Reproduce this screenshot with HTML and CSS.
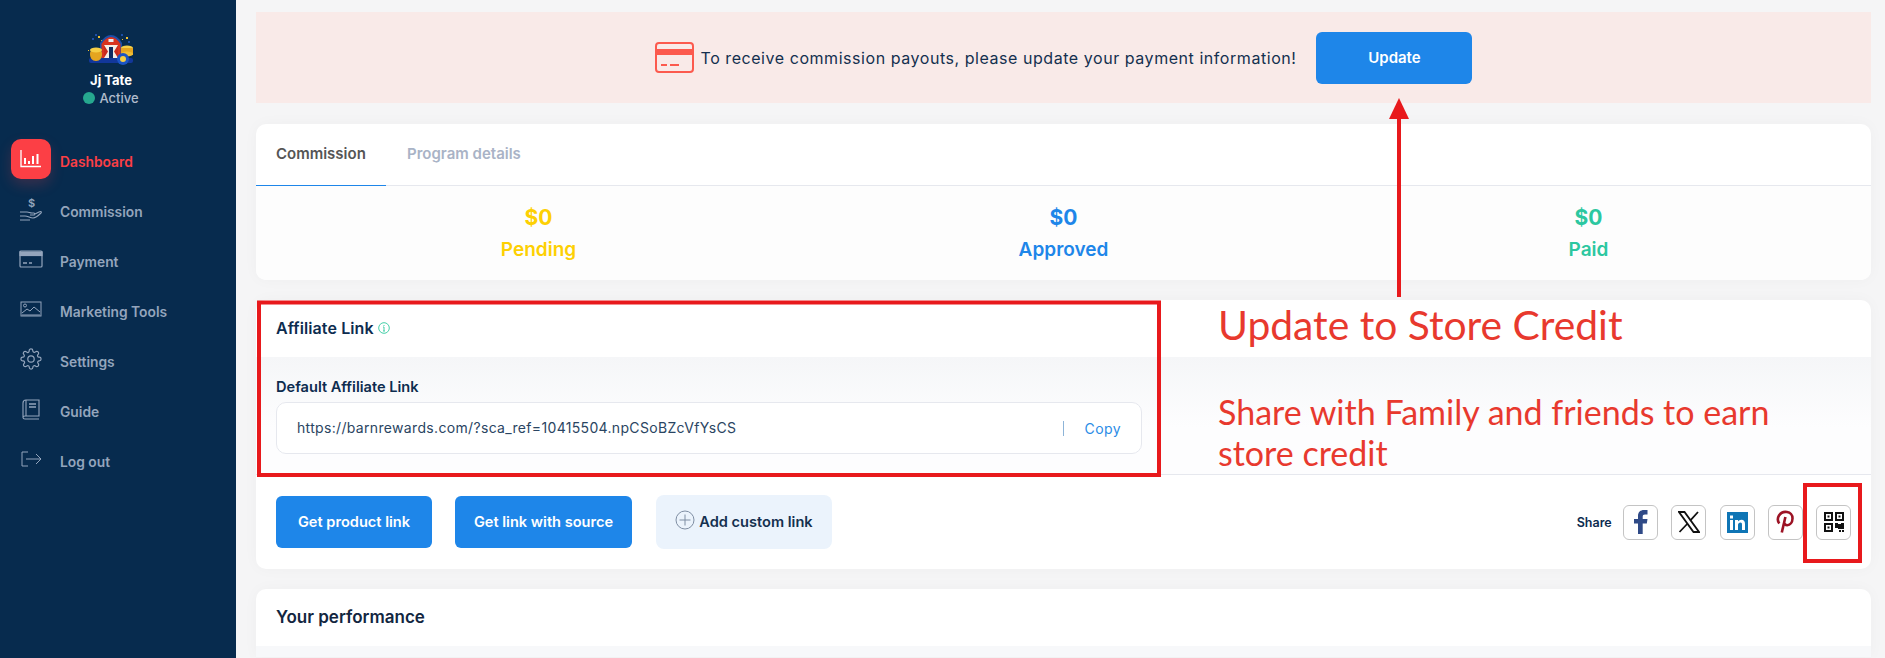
FILE: index.html
```html
<!DOCTYPE html>
<html lang="en">
<head>
  <meta charset="UTF-8">
  <title>Affiliate Dashboard</title>
  <link rel="stylesheet" href="styles.css">
</head>
<body>
  <aside class="sidebar">
    <div class="profile">
      <svg class="logo" viewBox="0 0 48 34">
        <g fill="#1d4fa8"><rect x="5" y="5" width="2" height="2"/><rect x="34" y="1" width="2" height="2"/><rect x="41" y="8" width="2" height="2"/><rect x="8" y="1" width="2" height="2"/></g>
        <g fill="#f2c230"><rect x="11" y="3" width="2" height="2"/><rect x="39" y="4" width="2" height="2"/><rect x="44" y="14" width="1" height="1"/><rect x="1" y="17" width="1" height="1"/><rect x="14" y="7" width="1" height="1"/><rect x="35" y="6" width="1" height="1"/></g>
        <rect x="2" y="25" width="44" height="5" rx="2" fill="#12379a"/>
        <path d="M13 25V10Q18 2 24 2T35 10v15z" fill="#1d4fa8"/>
        <path d="M14.500 25V11Q19 4 24 4T33.500 11v14z" fill="#d8321f"/>
        <rect x="21.500" y="6" width="5" height="3" fill="#e8eef5"/>
        <rect x="17" y="12" width="14" height="13" fill="#f4ece6"/>
        <path d="M17 12l4 6.500-4 6.500zM31 12l-4 6.500 4 6.500z" fill="#c92a1e"/>
        <rect x="22" y="14" width="4" height="11" fill="#0f2a60"/>
        <path d="M3 21c0-4 3-6 6-6s6 2 6 6-2 7-6 7-6-3-6-7z" fill="#e5a51f"/>
        <ellipse cx="9" cy="17" rx="6" ry="2.500" fill="#f6cf45"/>
        <ellipse cx="40" cy="15" rx="6" ry="2.500" fill="#f6cf45"/>
        <rect x="34" y="15" width="12" height="7" fill="#e5a51f"/>
        <ellipse cx="40" cy="21" rx="6" ry="2.500" fill="#f0bd35"/>
        <circle cx="36" cy="26" r="6" fill="#1b55c4"/>
        <circle cx="36" cy="26" r="3" fill="#f6cf45"/>
      </svg>
      <div class="profile-name">Jj Tate</div>
      <div class="profile-status"><span class="status-dot"></span>Active</div>
    </div>

    <nav class="nav">
      <a class="nav-item nav-item-active">
        <span class="nav-icon">
          <svg width="22" height="18" viewBox="0 0 22 18" fill="none" stroke="#fff" stroke-width="1.300">
            <path d="M1 0v16.500h20"/>
            <path d="M5 8v6M9 11v3M13 6v8M17.500 4v10" stroke-width="2"/>
          </svg>
        </span>
        <span class="nav-label">Dashboard</span>
      </a>
      <a class="nav-item">
        <span class="nav-icon">
          <svg width="24" height="24" viewBox="0 0 24 24" fill="none" stroke="#94a5bc" stroke-width="1.100">
            <path d="M1 15h7c2 0 3 1 5 1h2c1 0 1 2 0 2h-4M1 19h5c3 0 5 2 8 2 2 0 5-2 8-5 1-1 0-2-2-1l-5 2.500M1 23h10"/>
            <text x="9" y="10" font-size="11" fill="#94a5bc" stroke="none" font-family="Inter, sans-serif">$</text>
          </svg>
        </span>
        <span class="nav-label">Commission</span>
      </a>
      <a class="nav-item">
        <span class="nav-icon">
          <svg width="24" height="18" viewBox="0 0 24 18" fill="none" stroke="#94a5bc" stroke-width="1.200">
            <rect x="1" y="1" width="22" height="16" rx="1"/>
            <rect x="1" y="2" width="22" height="3.500" fill="#94a5bc"/>
            <path d="M4 13h4M10 13h3" stroke-width="1.500"/>
          </svg>
        </span>
        <span class="nav-label">Payment</span>
      </a>
      <a class="nav-item">
        <span class="nav-icon">
          <svg width="22" height="16" viewBox="0 0 22 16" fill="none" stroke="#94a5bc" stroke-width="1">
            <rect x="1" y="1" width="20" height="14"/>
            <circle cx="5" cy="4.500" r="1.500"/>
            <path d="M2 12l5-4 3 2 4-4 6 5M2 14h18"/>
          </svg>
        </span>
        <span class="nav-label">Marketing Tools</span>
      </a>
      <a class="nav-item">
        <span class="nav-icon">
          <svg width="22" height="22" viewBox="0 0 24 24" fill="none" stroke="#94a5bc" stroke-width="1.300">
            <circle cx="12" cy="12" r="3.500"/>
            <path d="M19.400 15a1.650 1.650 0 0 0 .33 1.820l.06.06a2 2 0 1 1-2.830 2.830l-.06-.06a1.650 1.650 0 0 0-2.820 1.170V21a2 2 0 1 1-4 0v-.09a1.650 1.650 0 0 0-2.820-1.170l-.06.06a2 2 0 1 1-2.830-2.830l.06-.06A1.650 1.650 0 0 0 3.090 14H3a2 2 0 1 1 0-4h.09a1.650 1.650 0 0 0 1.170-2.820l-.06-.06a2 2 0 1 1 2.830-2.830l.06.06A1.650 1.650 0 0 0 10 3.090V3a2 2 0 1 1 4 0v.09a1.650 1.650 0 0 0 2.820 1.170l.06-.06a2 2 0 1 1 2.830 2.830l-.06.06A1.650 1.650 0 0 0 20.910 10H21a2 2 0 1 1 0 4h-.09a1.650 1.650 0 0 0-1.510 1z"/>
          </svg>
        </span>
        <span class="nav-label">Settings</span>
      </a>
      <a class="nav-item">
        <span class="nav-icon">
          <svg width="18" height="21" viewBox="0 0 18 21" fill="none" stroke="#94a5bc" stroke-width="1.100">
            <path d="M4 1h13v16H3c-1 0-2 .6-2 1.500S2 20 3 20h14M1 18.500V4c0-2 1-3 3-3M4 1v16"/>
            <path d="M7 5h7M7 8h7" stroke-width="1.300"/>
          </svg>
        </span>
        <span class="nav-label">Guide</span>
      </a>
      <a class="nav-item">
        <span class="nav-icon">
          <svg width="21" height="16" viewBox="0 0 21 16" fill="none" stroke="#94a5bc" stroke-width="1">
            <path d="M7 1H1v14h6M5 8h15M15 3l5 5-5 5"/>
          </svg>
        </span>
        <span class="nav-label">Log out</span>
      </a>
    </nav>
  </aside>

  <main class="main">
    <section class="banner">
      <svg width="39" height="31" viewBox="0 0 39 31" fill="none">
        <rect x="1" y="1" width="37" height="29" rx="3" stroke="#fc5a4e" stroke-width="2"/>
        <rect x="1" y="7" width="37" height="6" fill="#fc5a4e"/>
        <path d="M6 23h6M15 23h9" stroke="#fc5a4e" stroke-width="2"/>
      </svg>
      <span class="banner-text">To receive commission payouts, please update your payment information!</span>
      <button class="btn btn-update">Update</button>
    </section>

    <section class="card">
      <div class="tabs">
        <div class="tab tab-active">Commission</div>
        <div class="tab tab-details">Program details</div>
      </div>
      <div class="stats">
        <div class="stat stat-pending"><div class="stat-value">$0</div><div class="stat-label">Pending</div></div>
        <div class="stat stat-approved"><div class="stat-value">$0</div><div class="stat-label">Approved</div></div>
        <div class="stat stat-paid"><div class="stat-value">$0</div><div class="stat-label">Paid</div></div>
      </div>
    </section>

    <section class="card">
      <div class="card-header">
        <h2 class="card-title">Affiliate Link</h2>
        <svg class="info-icon" width="12" height="12" viewBox="0 0 12 12" fill="none" stroke="#45cfa8">
          <circle cx="6" cy="6" r="5.300"/>
          <path d="M6 5v4M6 3v1M5 5h1M5 9h2"/>
        </svg>
      </div>
      <div class="link-body">
        <div class="link-label">Default Affiliate Link</div>
        <div class="link-box">
          <span class="link-url">https://barnrewards.com/?sca_ref=10415504.npCSoBZcVfYsCS</span>
          <span class="link-divider"></span>
          <span class="link-copy">Copy</span>
        </div>
      </div>
      <div class="link-footer">
        <button class="btn btn-product">Get product link</button>
        <button class="btn btn-source">Get link with source</button>
        <button class="btn-custom">
          <svg class="custom-icon" width="20" height="20" viewBox="0 0 20 20" fill="none" stroke="#7f8ea3">
            <circle cx="10" cy="10" r="9"/>
            <path d="M10 4.500v11M4.500 10h11"/>
          </svg>
          Add custom link
        </button>
        <div class="share">
          <span class="share-label">Share</span>
          <div class="share-btn">
            <svg width="14" height="24" viewBox="0 0 14 24"><path d="M4 24V13.500H0V9h4V6c0-4 2.400-6 6-6h3.500v4.500H11c-1.700 0-2.300.8-2.300 2.200V9h4.800l-.7 4.500H8.700V24z" fill="#2f4a87"/></svg>
          </div>
          <div class="share-btn">
            <svg width="22" height="22" viewBox="0 0 22 22" fill="none" stroke="#111"><path d="M1 1h5.500l14.500 20h-5.500z" stroke-width="1.800"/><path d="M20 1l-7.800 8.600M9.600 12.500L1.500 21" stroke-width="1.800"/></svg>
          </div>
          <div class="share-btn">
            <svg width="21" height="21" viewBox="0 0 21 21">
              <rect width="21" height="21" fill="#0f75b5"/>
              <path d="M3 8h3v10H3zM3 3.500h3v3H3zM8 8h3v1.500c.8-1.100 1.900-1.800 3.400-1.800 2.600 0 3.600 1.700 3.600 4.400V18h-3v-5.300c0-1.300-.4-2.200-1.600-2.200-1.300 0-2.400.9-2.400 2.500v5H8z" fill="#fff"/>
            </svg>
          </div>
          <div class="share-btn">
            <svg width="18" height="24" viewBox="0 0 18 24" fill="none" stroke="#9c1325" stroke-width="2.600"><path d="M3.300 13.500C1.600 11.200 1.500 8 3 5.500 4.800 2.700 8 1.500 11 2c3.200.5 5.600 3 5.500 6.500-.1 3.800-2.400 6.700-5.300 6.700-1.700 0-2.800-1-3-2.200"/><path d="M9.400 7l-3.600 15.500"/></svg>
          </div>
          <div class="share-btn">
            <svg width="20" height="20" viewBox="0 0 20 20">
              <path fill-rule="evenodd" d="M0 0h9v9H0zM2 2v5h5V2zM11 0h9v9h-9zM13 2v5h5V2zM0 11h9v9H0zM2 13v5h5v-5z" fill="#111"/>
              <path d="M3.500 3.500h2v2h-2zM14.500 3.500h2v2h-2zM3.500 14.500h2v2h-2zM11 11h3v1h3v-1h3v6h-6v-1h-3zM15 18h2v2h-2zM18 18h2v2h-2z" fill="#111"/>
            </svg>
          </div>
        </div>
      </div>
    </section>

    <section class="card card-performance">
      <div class="card-header">
        <h2 class="card-title card-title-dark">Your performance</h2>
      </div>
      <div class="performance-body"></div>
    </section>
  </main>

  <!-- red markup drawn over the screenshot -->
  <svg class="markup" width="1885" height="658" viewBox="0 0 1885 658" fill="none">
    <rect x="259" y="302.500" width="900" height="172.500" stroke="#e8191c" stroke-width="4"/>
    <rect x="1805" y="485" width="55" height="76" stroke="#e8191c" stroke-width="4"/>
    <path d="M1399 297V116" stroke="#e8191c" stroke-width="4"/>
    <path d="M1399 98l10 21h-20z" fill="#e8191c"/>
  </svg>
  <div class="note note-title">Update to Store Credit</div>
  <div class="note note-body">Share with Family and friends to earn store credit</div>
</body>
</html>
```

FILE: styles.css
```css
* {
  box-sizing: border-box;
}

html,
body {
  height: 100%;
  margin: 0;
  overflow: hidden;
}

body {
  position: relative;
  display: flex;
  font-family: 'Inter', 'Open Sans', sans-serif;
  background-color: #f5f5f6;
  color: #0d2c4f;
}

.sidebar {
  width: 236px;
  flex-shrink: 0;
  background-color: #072b4e;
  padding-top: 33px;
}

.profile {
  display: flex;
  flex-direction: column;
  align-items: center;
  padding-right: 14px;
}

.logo {
  width: 48px;
  height: 34px;
}

.profile-name {
  margin-top: 4px;
  color: #fff;
  font-size: 13px;
  font-weight: 700;
  line-height: 18px;
}

.profile-status {
  display: flex;
  align-items: center;
  gap: 4px;
  color: #b0bccc;
  font-size: 13px;
  font-weight: 500;
  line-height: 18px;
}

.status-dot {
  width: 12px;
  height: 12px;
  border-radius: 50%;
  background-color: #26a88f;
}

.nav {
  margin-top: 32px;
  display: flex;
  flex-direction: column;
  gap: 10px;
  padding-left: 11px;
}

.nav-item {
  display: flex;
  align-items: center;
  gap: 9px;
  height: 40px;
  color: #94a5bc;
  font-size: 13.8px;
  font-weight: 600;
}

.nav-label {
  margin-top: 6px;
}

.nav-item-active {
  color: #fc3f45;
}

.nav-icon {
  width: 40px;
  height: 40px;
  display: flex;
  align-items: center;
  justify-content: center;
  border-radius: 10px;
}

.nav-item-active .nav-icon {
  background-color: #fc3f45;
  box-shadow: 0 6px 14px rgba(252, 63, 69, 0.2);
}

.main {
  flex: 1;
  min-width: 0;
  padding: 12px 14px 0 20px;
  display: flex;
  flex-direction: column;
  gap: 20px;
}

.banner {
  height: 91px;
  flex-shrink: 0;
  background-color: #f9eae8;
  display: flex;
  align-items: center;
  justify-content: center;
  margin-bottom: 1px;
}

.banner-text {
  margin: 0 20px 0 7px;
  font-size: 16px;
  color: #14304f;
  letter-spacing: 0.55px;
}

.btn {
  height: 52px;
  border: none;
  border-radius: 6px;
  background-color: #1e86e9;
  color: #fff;
  font-family: inherit;
  font-size: 14.6px;
  font-weight: 600;
}

.btn-update {
  width: 156px;
  font-size: 15px;
}

.card {
  background-color: #fff;
  border-radius: 10px;
  box-shadow: 0 0 15px rgba(0, 0, 0, 0.03);
  overflow: hidden;
  flex-shrink: 0;
}

.tabs {
  height: 62px;
  display: flex;
  border-bottom: 1px solid #e6e8ee;
}

.tab {
  padding: 0 20px;
  line-height: 60px;
  font-size: 15px;
  font-weight: 600;
  color: #a9b3c6;
}

.tab-active {
  width: 130px;
  height: 62px;
  color: #555;
  border-bottom: 1px solid #1e86e9;
}

.tab-details {
  padding-left: 21px;
}

.stats {
  height: 94px;
  padding: 16px 20px 0;
  display: grid;
  grid-template-columns: repeat(3, 1fr);
  background-color: #fdfdfd;
  text-align: center;
}

.stat-value {
  font-size: 21px;
  font-weight: 700;
  line-height: 32px;
}

.stat-label {
  font-size: 19px;
  font-weight: 600;
  line-height: 32px;
}

.stat-pending {
  color: #fdd003;
}

.stat-approved {
  color: #1e86e9;
}

.stat-paid {
  color: #2cc7a0;
}

.card-header {
  height: 57px;
  padding: 0 20px 1px;
  display: flex;
  align-items: center;
  gap: 4px;
}

.card-title {
  margin: 0;
  font-size: 16px;
  font-weight: 600;
  letter-spacing: 0.1px;
  color: #0d2c4f;
}

.card-title-dark {
  font-size: 17px;
  letter-spacing: 0;
  color: #12263f;
}

.link-body {
  height: 118px;
  padding: 20px 20px 0;
  background: linear-gradient(#f5f6f8, #fdfdfe 60%);
  border-bottom: 1px solid #e6e8ee;
}

.link-label {
  font-size: 14.6px;
  font-weight: 600;
  line-height: 20px;
  margin-bottom: 5px;
}

.link-box {
  width: 866px;
  height: 52px;
  padding: 0 20px;
  display: flex;
  align-items: center;
  background-color: #fff;
  border: 1px solid #e6e8ee;
  border-radius: 10px;
  font-size: 14px;
}

.link-url {
  flex: 1;
  margin-top: -2px;
  color: #2a4562;
  letter-spacing: 0.33px;
}

.link-divider {
  width: 1px;
  height: 15px;
  background-color: #8db4d8;
  margin-right: 21px;
}

.link-copy {
  color: #2b8ce6;
  letter-spacing: 0.4px;
}

.link-footer {
  height: 94px;
  padding: 0 20px;
  display: flex;
  align-items: center;
}

.btn-product {
  width: 156px;
  margin-right: 23px;
}

.btn-source {
  width: 177px;
  margin-right: 24px;
}

.btn-custom {
  width: 176px;
  height: 54px;
  border: none;
  border-radius: 8px;
  background-color: #ebf3fc;
  color: #14304f;
  font-family: inherit;
  font-size: 14.6px;
  font-weight: 600;
  display: flex;
  align-items: center;
  justify-content: center;
  gap: 4px;
}

.custom-icon {
  margin-bottom: 5px;
}

.share {
  margin-left: auto;
  display: flex;
  align-items: center;
  gap: 13.25px;
}

.share-label {
  font-size: 12.5px;
  font-weight: 600;
  margin-right: -2px;
}

.share-btn {
  width: 35px;
  height: 35px;
  display: flex;
  align-items: center;
  justify-content: center;
  border: 1px solid #c4c4c4;
  border-radius: 6px;
  background-color: #fff;
}

.card-performance {
  border-radius: 10px 10px 0 0;
}

.performance-body {
  height: 11px;
  background-color: #f7f8fa;
}

.markup {
  position: absolute;
  top: 0;
  left: 0;
  pointer-events: none;
}

.note {
  position: absolute;
  left: 1218px;
  color: #e8392e;
  font-family: 'Lato', sans-serif;
}

.note-title {
  top: 301px;
  font-size: 40.8px;
  line-height: 48px;
}

.note-body {
  top: 391px;
  width: 600px;
  font-size: 34px;
  line-height: 41px;
}
```
